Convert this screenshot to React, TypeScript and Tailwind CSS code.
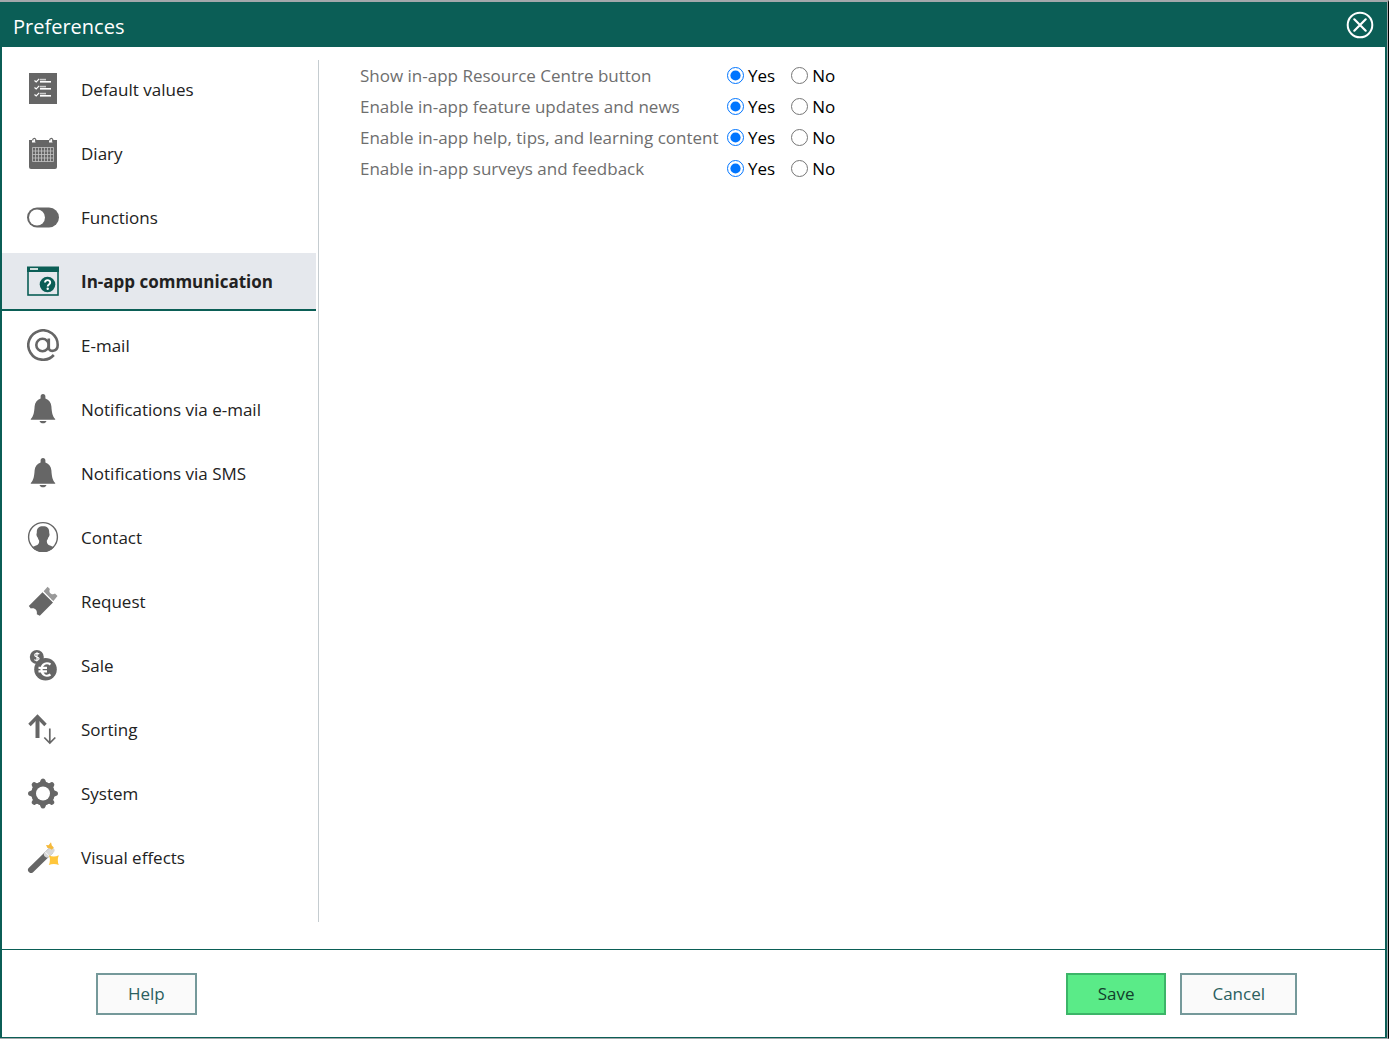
import { useState, type ReactNode } from "react";

function Svg({ children }: { children: ReactNode }) {
  return (
    <svg viewBox="0 0 32 32" className="size-8 shrink-0" aria-hidden="true" fill="#666666">
      {children}
    </svg>
  );
}

const Bell = () => (
  <Svg>
    <path d="M16 1c1.500 0 2.400 1 2.400 2.400v2c3.600 1.200 5.700 4 6 8 .4 6 1 9.500 3.800 12.600v.8H3.800V26c2.800-3.100 3.400-6.600 3.800-12.600.3-4 2.400-6.800 6-8v-2C13.600 2 14.500 1 16 1z" />
    <path d="M12.500 28h7c-.6 1.500-1.800 2.300-3.500 2.300s-2.900-.8-3.500-2.300z" />
  </Svg>
);

const DefaultsIcon = () => (
  <Svg>
    <rect x="2" y="0" width="28" height="31" />
    {[6, 13, 20].map((y) => (
      <g key={y}>
        <path d={`M7.500 ${y + 1.5}l1.700 1.500 3-3.200`} fill="none" stroke="#fff" strokeWidth="1.200" />
        <rect x="13" y={y - 0.2} width="6" height="1.600" fill="#ccc" />
        <rect x="13" y={y + 2} width="11" height="1.600" fill="#fff" />
      </g>
    ))}
  </Svg>
);

const DiaryIcon = () => (
  <Svg>
    <path d="M2 3h28v27q0 2-2 2H4q-2 0-2-2z" />
    {[7, 24].map((x) => (
      <g key={x}>
        <path d={`M${x - 2} 2.500h3.500v3h-3.500z`} fill="#fff" />
        <path d={`M${x - 1.2} 3.500v-1a1.600 1.600 0 1 1 2.200 2`} fill="none" stroke="#666" strokeWidth="1.200" />
      </g>
    ))}
    <path
      d="M5.500 10.500h21v14h-21zM5.500 14h21M5.500 17.500h21M5.500 21h21M8.500 10.500v14M11.500 10.500v14M14.500 10.500v14M17.500 10.500v14M20.500 10.500v14M23.500 10.500v14"
      fill="none"
      stroke="#c4c4c4"
      strokeWidth=".8"
    />
  </Svg>
);

const ToggleIcon = () => (
  <Svg>
    <rect y="6.500" width="32" height="20" rx="10" />
    <circle cx="10" cy="16.500" r="8" fill="#fff" />
  </Svg>
);

const InAppIcon = () => (
  <Svg>
    <rect x="1" y="3" width="30" height="27" fill="none" stroke="#0b5e56" strokeWidth="1.600" />
    <rect x="0" y="1.500" width="32" height="5.500" fill="#0b5e56" />
    <path d="M3 3l2 2 2-2 2 2 2-2M3 5l2-2 2 2 2-2 2 2" fill="none" stroke="#fff" strokeWidth=".8" />
    <circle cx="20.500" cy="19.500" r="7.800" fill="#0b5e56" />
    <path
      d="M18 17.600c0-3.200 5.200-3.200 5.200-.2 0 2-2.500 2-2.500 4"
      fill="none"
      stroke="#fff"
      strokeWidth="1.900"
    />
    <circle cx="20.700" cy="23.700" r="1.200" fill="#fff" />
  </Svg>
);

const AtIcon = () => (
  <Svg>
    <g fill="none" stroke="#666" strokeWidth="2.600">
      <circle cx="15.500" cy="16" r="6.200" />
      <path d="M21.800 9.500v9.500c0 4.200 8.900 4.200 8.900-3A14.700 14.700 0 1 0 26.800 26" />
    </g>
  </Svg>
);

const ContactIcon = () => (
  <Svg>
    <circle cx="16" cy="16" r="14.400" fill="#fff" stroke="#666" strokeWidth="1.400" />
    <path d="M16 5.200c4.200 0 6.300 2 6.200 6-.1 1.400.5 1.300.3 2.800-.2 1.600-1 1.800-1.400 3-.4 1.400-1.100 2.100-1.300 3 0 2.700 1.200 3.700 3.200 4.600 1.700.7 2.900 1 3.700 1.900a14.800 14.800 0 0 1-21.400 0c.8-.9 2-1.200 3.700-1.900 2-.9 3.200-1.900 3.200-4.600-.2-.9-.9-1.600-1.300-3-.4-1.200-1.200-1.400-1.400-3-.2-1.500.4-1.400.3-2.800-.1-4 2-6 6.200-6z" />
  </Svg>
);

const RequestIcon = () => (
  <Svg>
    <path d="M15.500 7.300 26 17.600 12.800 30.700 9.800 29.300c.9-4.700-2.500-7-6-5.800L1.800 21z" />
    <path
      d="M16.600 6.200l4-4.500 2.300 2.200c-1.900 3.700 2 6.600 5.100 4.600l2.500 2.600-4.300 5.200z"
      fill="#999"
    />
    <path d="M16 6.800l10.500 10.300" stroke="#fff" strokeWidth="1" strokeDasharray="1.500 1" />
  </Svg>
);

const SaleIcon = () => (
  <Svg>
    <circle cx="9.800" cy="8" r="7" />
    <path
      d="M12.300 5c-1-.9-4.600-1.200-4.600.9 0 2.200 4.400 1.700 4.400 3.900 0 2-3.300 2-4.800.8M10 3.200v9.400"
      fill="none"
      stroke="#fff"
      strokeWidth="1.200"
    />
    <circle cx="18.500" cy="20.300" r="11.300" />
    <path
      d="M23.500 15.500c-4-2.800-9-.5-9 5s5 7.800 9 5M11.500 18.900h8.500M11.500 22.300h8.500"
      fill="none"
      stroke="#fff"
      strokeWidth="2.200"
    />
  </Svg>
);

const SortingIcon = () => (
  <Svg>
    <path d="M10.500 25V4" fill="none" stroke="#666" strokeWidth="4" />
    <path d="M2.500 12 10.500 3.700 18.500 12" fill="none" stroke="#666" strokeWidth="3.400" />
    <path d="M22.800 15.500V30M17.300 24.500l5.500 5.500 5.500-5.500" fill="none" stroke="#666" strokeWidth="1.700" />
  </Svg>
);

const SystemIcon = () => (
  <Svg>
    {[0, 45, 90, 135].map((a) => (
      <path
        key={a}
        transform={`rotate(${a} 16 16.5)`}
        d="M11 6q2.500-.5 2.700-3Q14.300 1.500 16 1.500t2.300 1.500q.2 2.500 2.700 3v21q-2.500.5-2.700 3Q17.700 31.500 16 31.500t-2.300-1.500q-.2-2.500-2.700-3z"
      />
    ))}
    <circle cx="16" cy="16.500" r="11.500" />
    <circle cx="16" cy="16.500" r="7" fill="#fff" />
  </Svg>
);

const WandIcon = () => (
  <Svg>
    <path d="M4 29 23.500 10" stroke="#666" strokeWidth="6" strokeLinecap="round" />
    <path d="M20 13.500 24.500 9.200" stroke="#d8d8d8" strokeWidth="6" strokeLinecap="round" />
    <path d="M18.200 11l4.400 4.400" stroke="#fff" strokeWidth=".8" />
    <path d="M19 4.100l2.600.1L24 1.300l.8 3.300 2 1.800-2 2.300q-2-2-4.300-1.800z" fill="#f5b93a" />
    <path d="M21.800 14.300q5 2.500 10 0-2 5 0 9.800-5-2-10 0 2.200-5 0-9.800z" fill="#ffc63b" />
  </Svg>
);

const NAV: { label: string; Icon: () => ReactNode }[] = [
  { label: "Default values", Icon: DefaultsIcon },
  { label: "Diary", Icon: DiaryIcon },
  { label: "Functions", Icon: ToggleIcon },
  { label: "In-app communication", Icon: InAppIcon },
  { label: "E-mail", Icon: AtIcon },
  { label: "Notifications via e-mail", Icon: Bell },
  { label: "Notifications via SMS", Icon: Bell },
  { label: "Contact", Icon: ContactIcon },
  { label: "Request", Icon: RequestIcon },
  { label: "Sale", Icon: SaleIcon },
  { label: "Sorting", Icon: SortingIcon },
  { label: "System", Icon: SystemIcon },
  { label: "Visual effects", Icon: WandIcon },
];

const SETTINGS = [
  { id: "resource-centre", label: "Show in-app Resource Centre button" },
  { id: "updates", label: "Enable in-app feature updates and news" },
  { id: "help", label: "Enable in-app help, tips, and learning content" },
  { id: "surveys", label: "Enable in-app surveys and feedback" },
];

export default function App() {
  const [active, setActive] = useState("In-app communication");

  return (
    <div className="flex min-h-screen flex-col border-r border-b border-t-2 border-t-[#a3a8ab] border-r-black border-b-[#a3a8ab] bg-white font-['Open_Sans','Noto_Sans',sans-serif] text-[17px] leading-6 text-[#222222]">
      <div className="flex grow flex-col border-r border-r-[#a3a8ab]">
        <div className="flex grow flex-col border-x-2 border-b border-[#0b5e56]">
          <header className="flex h-[45px] items-center justify-between bg-[#0b5e56] px-[11px] text-white">
            <h1 className="pt-1 text-[20px] leading-7">Preferences</h1>
            <button type="button" aria-label="Close" className="pt-px">
              <svg viewBox="0 0 28 28" className="size-7" fill="none" stroke="#fff" aria-hidden="true">
                <circle cx="14" cy="14" r="12.300" strokeWidth="2" />
                <path d="M8.300 8.300l11.400 11.400M19.700 8.300 8.300 19.700" strokeWidth="2.200" strokeLinecap="round" />
              </svg>
            </button>
          </header>

          <main className="flex grow pt-[13px] pb-[27px]">
            <div className="flex border-r border-[#c5ccd0] pt-px pr-0.5">
              <nav aria-label="Preference categories" className="flex w-[314px] flex-col gap-1.5">
                {NAV.map(({ label, Icon }) => {
                  const on = label === active;
                  return (
                    <button
                      key={label}
                      type="button"
                      aria-current={on ? "page" : undefined}
                      onClick={() => setActive(label)}
                      className={
                        on
                          ? "flex h-[58px] items-center gap-[22px] border-b-2 border-[#0b5e56] bg-[#e5e8ed] pl-[25px] text-left font-bold"
                          : "flex h-[58px] items-center gap-[22px] border-b-2 border-transparent pl-[25px] text-left"
                      }
                    >
                      <Icon />
                      <span className="pt-px">{label}</span>
                    </button>
                  );
                })}
              </nav>
            </div>

            <section aria-label={active} className="pl-[41px]">
              {SETTINGS.map(({ id, label }) => (
                <div
                  key={id}
                  role="radiogroup"
                  aria-labelledby={id}
                  className="grid h-[31px] grid-cols-[367px_auto_auto] items-center"
                >
                  <span id={id} className="whitespace-nowrap text-[#6e6e6e]">
                    {label}
                  </span>
                  <label className="flex items-center gap-1 pr-4 text-black">
                    <input type="radio" name={id} defaultChecked className="size-[17px] accent-[#0075ff]" />
                    Yes
                  </label>
                  <label className="flex items-center gap-1 text-black">
                    <input type="radio" name={id} className="size-[17px] accent-[#0075ff]" />
                    No
                  </label>
                </div>
              ))}
            </section>
          </main>

          <footer className="flex items-center justify-between border-t border-[#0b5e56] pt-[23px] pr-[88px] pb-[22px] pl-[94px]">
            <button type="button" className="h-[42px] border-2 border-[#75999a] bg-[#fafafa] px-[30px] text-[#2b5f60]">
              Help
            </button>
            <div className="flex gap-3.5">
              <button type="button" className="h-[42px] border-2 border-[#3cb568] bg-[#5aeb88] px-[30px] text-[#12402c]">
                Save
              </button>
              <button type="button" className="h-[42px] border-2 border-[#75999a] bg-[#fafafa] px-[30px] text-[#2b5f60]">
                Cancel
              </button>
            </div>
          </footer>
        </div>
      </div>
    </div>
  );
}
